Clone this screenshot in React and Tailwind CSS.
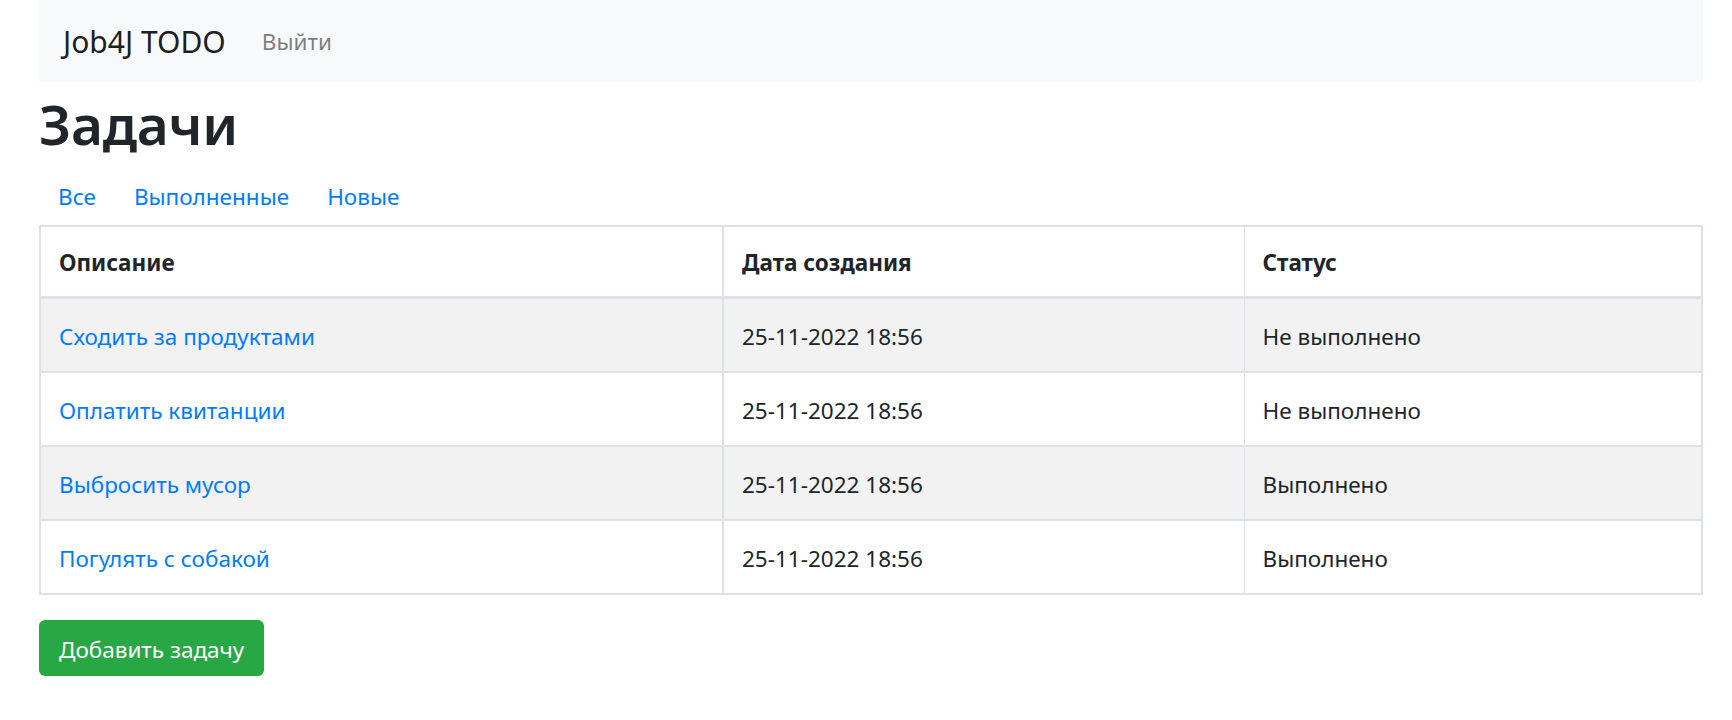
export default function App() {
  const rows = [
    { d: "Сходить за продуктами", s: "Не выполнено" },
    { d: "Оплатить квитанции", s: "Не выполнено" },
    { d: "Выбросить мусор", s: "Выполнено" },
    { d: "Погулять с собакой", s: "Выполнено" },
  ];
  return (
    <div className="min-h-screen bg-white text-[#212529] font-['Noto_Sans',sans-serif]">
      <div className="ml-[39px] w-[1664px]">
        <nav className="h-[82px] bg-[#f8f9fa] flex items-center px-[24px]">
          <span className="text-[30px] leading-[45px] text-black/90 mr-[24px]">Job4J TODO</span>
          <a className="text-[22.5px] leading-[36px] text-black/50 px-[12px] pt-[2px]">Выйти</a>
        </nav>
        <h1 className="text-[55px] leading-[72px] font-semibold pt-[6px] mb-[6px] tracking-[-0.3px]">Задачи</h1>
        <ul className="flex">
          {["Все", "Выполненные", "Новые"].map((t) => (
            <li key={t}>
              <a className="block px-[19px] pt-[13px] pb-[10px] text-[22.5px] leading-[36px] text-[#007bff]">{t}</a>
            </li>
          ))}
        </ul>
        <table className="w-[1664px] border-collapse border-2 border-[#dee2e6] text-[22.5px] leading-[36px]">
          <thead>
            <tr>
              <th className="w-[683px] text-left font-bold px-[18px] pt-[18px] pb-[15px] border-2 border-b-[3px] border-[#dee2e6]">Описание</th>
              <th className="w-[521px] text-left font-bold px-[18px] pt-[18px] pb-[15px] border-2 border-b-[3px] border-r border-[#dee2e6]">Дата создания</th>
              <th className="text-left font-bold px-[18px] pt-[18px] pb-[15px] border-2 border-b-[3px] border-l border-[#dee2e6]">Статус</th>
            </tr>
          </thead>
          <tbody>
            {rows.map((r, i) => (
              <tr key={i} className={i % 2 === 0 ? "bg-[#f2f2f2]" : "bg-white"}>
                <td className="px-[18px] pt-[20px] pb-[16px] border-2 border-[#dee2e6] text-[#007bff]">{r.d}</td>
                <td className="px-[18px] pt-[20px] pb-[16px] border-2 border-r border-[#dee2e6]">25-11-2022 18:56</td>
                <td className="px-[18px] pt-[20px] pb-[16px] border-2 border-l border-[#dee2e6]">{r.s}</td>
              </tr>
            ))}
          </tbody>
        </table>
        <button className="mt-[25px] h-[56px] px-[20px] pt-[4px] rounded-[6px] bg-[#28a745] text-white text-[22.5px] leading-[36px]">
          Добавить задачу
        </button>
      </div>
    </div>
  );
}
